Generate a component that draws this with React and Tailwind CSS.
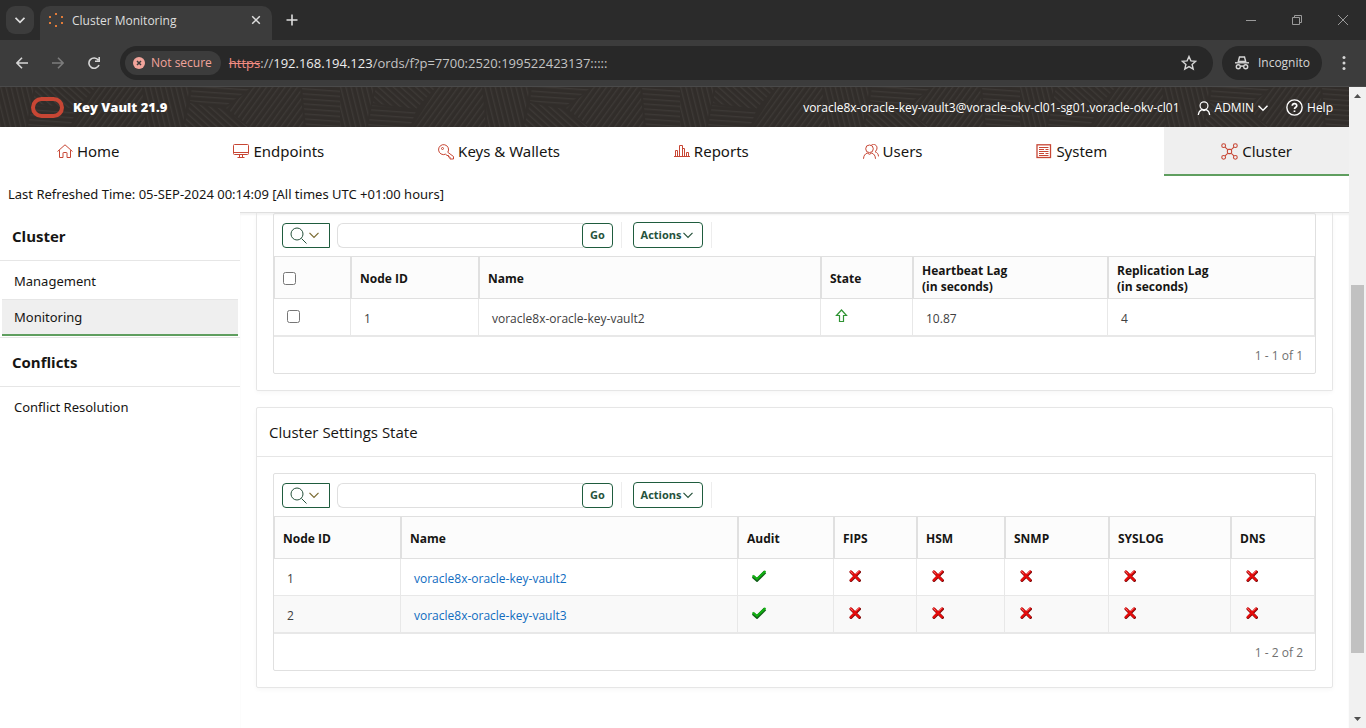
import { useState } from "react";

const ICON = "#c74634";

const patches = [
  { points: "0,0 34,0 26,40 0,40", hatch: "url(#hatchSteep)" },
  { points: "36,0 96,0 76,22 33,16", hatch: "url(#hatchDown)" },
  { points: "32,18 76,24 70,40 28,40", hatch: "url(#hatchFlat)" },
  { points: "98,0 142,0 146,40 72,40", hatch: "url(#hatchUp)" },
  { points: "144,0 190,0 182,40 148,40", hatch: "url(#hatchSteep)" },
  { points: "192,0 252,0 224,20 190,14", hatch: "url(#hatchFlat)" },
  { points: "190,16 224,22 248,40 184,40", hatch: "url(#hatchDown)" },
  { points: "254,0 300,0 304,40 250,40 226,21", hatch: "url(#hatchUp)" },
  { points: "302,0 340,0 340,40 306,40", hatch: "url(#hatchFlat)" },
];

const hatches = [
  { id: "hatchSteep", angle: -14 },
  { id: "hatchDown", angle: -48 },
  { id: "hatchFlat", angle: 94 },
  { id: "hatchUp", angle: 36 },
];

const navItems = [
  { label: "Home", icon: HomeIcon },
  { label: "Endpoints", icon: MonitorIcon },
  { label: "Keys & Wallets", icon: KeyIcon },
  { label: "Reports", icon: ChartIcon },
  { label: "Users", icon: UsersIcon },
  { label: "System", icon: ServerIcon },
  { label: "Cluster", icon: ClusterIcon, active: true },
];

const settingsColumns = ["Audit", "FIPS", "HSM", "SNMP", "SYSLOG", "DNS"];

const settingsRows = [
  { id: 1, name: "voracle8x-oracle-key-vault2", values: [true, false, false, false, false, false] },
  { id: 2, name: "voracle8x-oracle-key-vault3", values: [true, false, false, false, false, false] },
];

function Svg({ size = 16, viewBox = "0 0 16 16", className = "", width = 1, children }) {
  return (
    <svg
      width={size}
      height={size}
      viewBox={viewBox}
      fill="none"
      stroke="currentColor"
      strokeWidth={width}
      className={`shrink-0 ${className}`}
      aria-hidden="true"
    >
      {children}
    </svg>
  );
}

function HomeIcon() {
  return (
    <Svg>
      <path d="M.5 7.500 8 .8l7.500 6.700M2.500 6.200V13.500h3.500V9q0-.5.5-.5h3q.5 0 .5.5v4.500h3.500V6.200" />
    </Svg>
  );
}

function MonitorIcon() {
  return (
    <Svg>
      <rect x=".5" y=".5" width="15" height="10" rx="1" />
      <path d="M.5 8.500h15M6.500 10.500v3M9.500 10.500v3M4.500 13.500h7" />
    </Svg>
  );
}

function KeyIcon() {
  return (
    <Svg>
      <path d="M9.800 8.300A5 5 0 1 0 7.600 10.200L9 11.500h1.500v1.500H12v2h3.500v-2.500z" />
      <circle cx="4.500" cy="4.500" r="1" />
    </Svg>
  );
}

function ChartIcon() {
  return (
    <Svg>
      <path d="M0 12.500h16M1.500 12.500v-6h2v6M5.500 12.500v-11h3v11M8.500 4.500h2v8M12.500 12.500v-4h2v4" />
    </Svg>
  );
}

function UsersIcon() {
  return (
    <Svg>
      <circle cx="6.500" cy="4.800" r="3.800" />
      <path d="M.5 14.800c.2-3.200 1.500-4.800 3.700-5.800l2.300 1.300L8.800 9c2.200 1 3.500 2.600 3.700 5.800M8.500.9c2.600-1.400 5.500.2 5.500 3 0 1.700-.8 3-2 3.800 2.200.8 3.400 2.200 3.500 4.700" />
    </Svg>
  );
}

function ServerIcon() {
  return (
    <Svg>
      <rect x="1" y=".8" width="13.500" height="12.700" width="13.500" strokeWidth="1.300" />
      <path d="M3 3.500h9.500M3 5.500h5M9.500 5.500h3M3 7.500h9.500M3 9.500h5M9.500 9.500h3M3 11.500h9.500" />
    </Svg>
  );
}

function ClusterIcon() {
  return (
    <Svg size={17}>
      <circle cx="2.500" cy="2.500" r="1.800" />
      <circle cx="13.500" cy="2.500" r="1.800" />
      <circle cx="2.500" cy="13.500" r="1.800" />
      <circle cx="13.500" cy="13.500" r="1.800" />
      <rect x="6" y="6" width="4" height="4" rx="1.200" />
      <path d="M3.800 3.800 6.300 6.300M12.200 3.800 9.700 6.300M3.800 12.200l2.500-2.500M12.200 12.200 9.700 9.700" />
    </Svg>
  );
}

function Chevron({ className, width }) {
  return (
    <Svg size={10} viewBox="0 0 10 10" className={className} width={width}>
      <path d="M.5 2.800 5 7.300l4.500-4.500" />
    </Svg>
  );
}

function StatusIcon({ ok }) {
  if (ok) {
    return (
      <svg width="16" height="12" viewBox="0 0 16 12" role="img" aria-label="Enabled" className="block">
        <path d="M2 6.500 6 10l8-8" fill="none" stroke="#14611a" strokeWidth="3.400" />
        <path d="M1.500 5.500 6 9l8.500-8" fill="none" stroke="#12b312" strokeWidth="2" />
      </svg>
    );
  }
  return (
    <svg width="12" height="12" viewBox="0 0 12 12" role="img" aria-label="Disabled" className="ml-[2px] block">
      <path d="M2 2l8.500 8.500M10.500 2 2 10.500" stroke="#7c0a0a" strokeWidth="3" strokeLinecap="round" />
      <path d="M1.800 1.500l8.200 8.500M10 1.500 1.800 10" stroke="#e80c0c" strokeWidth="2.200" strokeLinecap="round" />
      <path d="M1.500 1.500l2 2M9.500 1.500l-2 2" stroke="#f46a6a" strokeWidth="1" strokeLinecap="round" />
    </svg>
  );
}

function TabStrip() {
  return (
    <div className="flex h-10 shrink-0 items-end bg-[#2b2b2b] pl-[6px] text-[#dedede]">
      <button
        type="button"
        aria-label="Search tabs"
        className="mb-[6px] flex h-7 w-7 items-center justify-center rounded-[9px] bg-[#3c3c3c]"
      >
        <Chevron width={1.8} />
      </button>
      <div className="ml-[6px] flex h-[34px] w-[232px] items-center rounded-t-[10px] bg-[#3c3c3c] pb-[6px] pl-2 pr-[11px]">
        <svg width="16" height="16" viewBox="0 0 16 16" fill="#e07b39" aria-hidden="true">
          <rect x="7" y="1" width="2" height="2" />
          <rect x="1" y="4" width="2" height="2" />
          <rect x="13" y="4" width="2" height="2" />
          <rect x="1" y="10" width="2" height="2" />
          <rect x="13" y="10" width="2" height="2" />
          <rect x="7" y="13" width="2" height="2" />
        </svg>
        <span className="ml-2 mt-[2px] flex-1 text-[12px]">Cluster Monitoring</span>
        <button type="button" aria-label="Close tab">
          <Svg size={10} viewBox="0 0 10 10" width={1.5}>
            <path d="M1.200 1.200l7.600 7.600M8.800 1.200 1.200 8.800" />
          </Svg>
        </button>
      </div>
      <button type="button" aria-label="New tab" className="mb-[14px] ml-[14px]">
        <Svg size={12} viewBox="0 0 12 12" width={1.6}>
          <path d="M6 .5v11M.5 6h11" />
        </Svg>
      </button>
      <div className="mb-[15px] ml-auto flex items-center gap-9 pr-[18px] text-[#9a9a9a]">
        <button type="button" aria-label="Minimize">
          <Svg size={10} viewBox="0 0 10 10"><path d="M0 5.500h10" /></Svg>
        </button>
        <button type="button" aria-label="Restore">
          <Svg size={10} viewBox="0 0 10 10"><path d="M.5 2.500h7v7h-7zM2.500 2.500v-2h7v7h-2" /></Svg>
        </button>
        <button type="button" aria-label="Close">
          <Svg size={10} viewBox="0 0 10 10"><path d="M0 0l10 10M10 0 0 10" /></Svg>
        </button>
      </div>
    </div>
  );
}

function AddressBar() {
  return (
    <div className="flex h-[47px] shrink-0 items-center border-b border-[#4a4a4a] bg-[#3c3c3c] pl-4 pr-5 text-[#d6d6d6]">
      <button type="button" aria-label="Back">
        <Svg size={12} viewBox="0 0 12 12" width={1.6}><path d="M12 6H1M6 .8.900 6 6 11.200" /></Svg>
      </button>
      <button type="button" aria-label="Forward" className="ml-6 text-[#7c7c7c]">
        <Svg size={12} viewBox="0 0 12 12" width={1.6}><path d="M0 6h11M6 .8 11.100 6 6 11.200" /></Svg>
      </button>
      <button type="button" aria-label="Reload" className="ml-6">
        <Svg size={12} viewBox="0 0 12 12" width={1.6}><path d="M11 8A5.200 5.200 0 1 1 10.300 3M11.200 0v4.200H7" /></Svg>
      </button>
      <div className="ml-5 flex h-[34px] flex-1 items-center rounded-full bg-[#282828] pl-[5px] pr-4">
        <button type="button" className="flex h-6 items-center rounded-full bg-[#3c3c3c] pl-2 pr-[9px] text-[12px] font-medium text-[#f2a49b]">
          <Svg size={12} viewBox="0 0 12 12" className="mr-[6px]">
            <circle cx="6" cy="6" r="6" fill="#f2a49b" stroke="none" />
            <path d="M4 4l4 4M8 4 4 8" stroke="#3c3c3c" strokeWidth="1.500" />
          </Svg>
          Not secure
        </button>
        <p className="ml-2 flex-1 whitespace-nowrap pt-px text-[13px] text-[#c4c4c4]">
          <span className="text-[#f28b82] line-through">https</span>://
          <span className="text-[#ededed]">192.168.194.123</span>
          /ords/f?p=7700:2520:199522423137:::::
        </p>
        <button type="button" aria-label="Bookmark">
          <Svg width={1.400}>
            <path d="M8 1.500l1.900 4.400 4.800.4-3.600 3.100 1.100 4.700L8 11.600l-4.200 2.500 1.100-4.700L1.300 6.300l4.800-.4z" />
          </Svg>
        </button>
      </div>
      <button type="button" className="ml-[9px] flex h-[34px] items-center rounded-full bg-[#282828] px-3 text-[12px]">
        <Svg className="mr-2" width={1.400}>
          <path d="M4.300 6.500 5.500 2h5l1.200 4.500z" />
          <path d="M1 7.800h14" />
          <circle cx="4.300" cy="11.800" r="2" />
          <circle cx="11.700" cy="11.800" r="2" />
          <path d="M6.300 11.500q1.700-1 3.400 0" />
        </Svg>
        Incognito
      </button>
      <button type="button" aria-label="Menu" className="ml-5">
        <svg width="4" height="16" viewBox="0 0 4 16" fill="currentColor" aria-hidden="true">
          <circle cx="2" cy="2.500" r="1.500" />
          <circle cx="2" cy="8" r="1.500" />
          <circle cx="2" cy="13.500" r="1.500" />
        </svg>
      </button>
    </div>
  );
}

function HeaderTexture() {
  return (
    <svg className="absolute inset-0 h-full w-full" aria-hidden="true">
      <defs>
        {hatches.map((h) => (
          <pattern
            key={h.id}
            id={h.id}
            width="5"
            height="5"
            patternUnits="userSpaceOnUse"
            patternTransform={`rotate(${h.angle})`}
          >
            <rect width="1.300" height="5" fill="#3d3936" />
          </pattern>
        ))}
        <pattern id="texture" width="340" height="40" patternUnits="userSpaceOnUse">
          {patches.map((p) => (
            <polygon key={p.points} points={p.points} fill={p.hatch} />
          ))}
        </pattern>
      </defs>
      <rect width="100%" height="100%" fill="url(#texture)" />
    </svg>
  );
}

function AppHeader() {
  return (
    <header className="relative h-10 shrink-0 bg-[#312d2a] text-white">
      <HeaderTexture />
      <div className="relative flex h-full items-center pl-[31px] pr-4 pt-px">
        <svg width="33" height="21" viewBox="0 0 33 21" fill="none" aria-hidden="true">
          <rect x="2" y="2" width="29" height="17" rx="8.500" stroke={ICON} strokeWidth="4" />
        </svg>
        <span className="ml-[9px] text-[13px] font-extrabold">Key Vault 21.9</span>
        <span className="ml-auto text-[12px]">
          voracle8x-oracle-key-vault3@voracle-okv-cl01-sg01.voracle-okv-cl01
        </span>
        <button type="button" className="ml-[17px] flex items-center text-[12px]">
          <Svg size={14} className="mr-1" width={1.400}>
            <circle cx="8" cy="5.500" r="4.500" />
            <path d="M1.500 16c.3-3.500 1.800-5.200 4-6.200L8 11l2.500-1.200c2.200 1 3.700 2.700 4 6.200" />
          </Svg>
          ADMIN
          <Chevron className="ml-1" width={1.400} />
        </button>
        <button type="button" className="ml-[18px] flex items-center text-[12px]">
          <Svg size={17} className="mr-1" width={1.300}>
            <circle cx="8" cy="8" r="7.200" />
            <path d="M5.900 6.300c.2-2.700 4.300-2.600 4.200 0 0 1.500-2.100 1.500-2.100 3.200M8 10.800v1.500" strokeWidth="1.600" />
          </Svg>
          Help
        </button>
      </div>
    </header>
  );
}

function NavTabs() {
  return (
    <nav className="flex h-[49px] shrink-0 font-['Noto_Sans',sans-serif] text-[15px] text-[#161513]">
      {navItems.map(({ label, icon: Icon, active }) => (
        <a
          key={label}
          href="#"
          className={
            active
              ? "flex flex-auto items-center justify-center border-b-2 border-[#5f9e5f] bg-[#efefef] pt-[2px]"
              : "flex flex-auto items-center justify-center"
          }
        >
          <span className="mr-1 text-[#c74634]">
            <Icon />
          </span>
          {label}
        </a>
      ))}
    </nav>
  );
}

function SideNav() {
  const heading = "flex h-[49px] items-center border-b border-[#e6e6e6] pl-3 font-['Open_Sans',sans-serif] text-[15px] font-bold";
  return (
    <aside className="w-60 shrink-0 font-['Noto_Sans',sans-serif] text-[13px] text-[#161513]">
      <h2 className={heading}>Cluster</h2>
      <a href="#" className="flex h-[38px] items-center pl-[14px] pt-1">Management</a>
      <a
        href="#"
        className="mx-[2px] flex h-[37px] items-center border-b-2 border-t border-b-[#5f9e5f] border-t-[#e6e6e6] bg-[#efefef] pl-3 pt-[2px]"
      >
        Monitoring
      </a>
      <div className="mt-px border-t border-[#e6e6e6]">
        <h2 className={heading}>Conflicts</h2>
        <a href="#" className="flex h-10 items-center pl-[14px] pt-[2px]">Conflict Resolution</a>
      </div>
    </aside>
  );
}

function ReportToolbar({ name }) {
  const [query, setQuery] = useState("");
  const button = "flex items-center border border-[#1f5c3e] bg-white text-[11px] font-bold text-[#26523c]";
  return (
    <div className="flex h-[43px] items-center border-b border-[#e0e0e0] pl-2">
      <button type="button" aria-label="Select columns to search" className={`${button} h-[25px] w-12 rounded-l-[4px] pl-[7px]`}>
        <Svg size={17} viewBox="0 0 17 17" className="mr-[2px]">
          <circle cx="7" cy="7" r="6" />
          <path d="M11.500 11.500l5 5" />
        </Svg>
        <Chevron className="text-[#7a6a30]" width={1.2} />
      </button>
      <input
        type="text"
        aria-label={`Search ${name}`}
        value={query}
        onChange={(e) => setQuery(e.target.value)}
        className="ml-[7px] h-[25px] w-[246px] rounded-l-[6px] border border-r-0 border-[#dfdfdf] px-2 text-[12px] outline-none"
      />
      <button type="button" className={`${button} -ml-px h-[25px] w-[31px] justify-center rounded-[4px]`}>
        Go
      </button>
      <div className="ml-2 flex h-[26px] items-center border-x border-[#ededed] px-[11px] pr-2">
        <button type="button" className={`${button} h-[26px] w-[70px] justify-center rounded-[4px]`}>
          Actions
          <Chevron className="ml-[2px] mr-[2px]" width={1.2} />
        </button>
      </div>
    </div>
  );
}

function Th({ children }) {
  return (
    <th
      scope="col"
      className="h-[42px] border-b border-l-2 border-[#e0e0e0] bg-[#fcfcfc] pl-2 pt-[2px] text-left text-[12px] leading-4 font-bold text-[#161513] first:border-l last:border-r"
    >
      {children}
    </th>
  );
}

function Td({ children }) {
  return (
    <td className="h-[37px] border-b border-l border-[#e8e8e8] pl-[13px] pt-[3px] text-[12px] text-[#404040] first:border-l-0 last:border-r">
      {children}
    </td>
  );
}

function Report({ name, pages, children }) {
  return (
    <div className="m-4 rounded-[2px] border border-[#e0e0e0]">
      <ReportToolbar name={name} />
      {children}
      <p className="flex h-[37px] items-center justify-end border-t border-[#e8e8e8] pr-3 pt-[2px] text-[12px] text-[#707070]">
        {pages}
      </p>
    </div>
  );
}

function LagReport() {
  return (
    <Report name="replication lag" pages="1 - 1 of 1">
      <table className="w-full table-fixed border-separate border-spacing-0">
        <colgroup>
          <col className="w-[76px]" />
          <col className="w-[128px]" />
          <col />
          <col className="w-[92px]" />
          <col className="w-[195px]" />
          <col className="w-[208px]" />
        </colgroup>
        <thead>
          <tr>
            <Th><input type="checkbox" aria-label="Select all" className="block" /></Th>
            <Th>Node ID</Th>
            <Th>Name</Th>
            <Th>State</Th>
            <Th>Heartbeat Lag<br />(in seconds)</Th>
            <Th>Replication Lag<br />(in seconds)</Th>
          </tr>
        </thead>
        <tbody>
          <tr>
            <td className="border-b border-[#e8e8e8] pb-[2px] pl-[13px]">
              <input type="checkbox" aria-label="Select node 1" className="block" />
            </td>
            <Td>1</Td>
            <Td>voracle8x-oracle-key-vault2</Td>
            <Td>
              <div className="pb-[6px]">
                <Svg size={13} viewBox="0 0 13 13" className="ml-px block text-[#2f9433]" width={1.200}>
                  <path d="M6.500 1 1.500 6.500H4.500v6h4v-6h3z" />
                </Svg>
              </div>
            </Td>
            <Td>10.87</Td>
            <Td>4</Td>
          </tr>
        </tbody>
      </table>
    </Report>
  );
}

function SettingsReport() {
  return (
    <Report name="cluster settings" pages="1 - 2 of 2">
      <table className="w-full table-fixed border-separate border-spacing-0">
        <colgroup>
          <col className="w-[126px]" />
          <col />
          <col className="w-[96px]" />
          <col className="w-[83px]" />
          <col className="w-[88px]" />
          <col className="w-[104px]" />
          <col className="w-[122px]" />
          <col className="w-[85px]" />
        </colgroup>
        <thead>
          <tr>
            <Th>Node ID</Th>
            <Th>Name</Th>
            {settingsColumns.map((c) => (
              <Th key={c}>{c}</Th>
            ))}
          </tr>
        </thead>
        <tbody>
          {settingsRows.map((row) => (
            <tr key={row.id} className="even:bg-[#f9f9f9]">
              <Td>{row.id}</Td>
              <Td><a href="#" className="text-[#0f6cbf]">{row.name}</a></Td>
              {row.values.map((ok, i) => (
                <Td key={settingsColumns[i]}>
                  <div className="pb-[5px]"><StatusIcon ok={ok} /></div>
                </Td>
              ))}
            </tr>
          ))}
        </tbody>
      </table>
    </Report>
  );
}

function Scrollbar() {
  return (
    <div className="flex w-[17px] shrink-0 flex-col items-center bg-[#f1f1f1]" aria-hidden="true">
      <svg width="17" height="17" viewBox="0 0 17 17" fill="#505050"><path d="M5 11l3.500-4 3.500 4z" /></svg>
      <div className="w-[13px] grow-[181]" />
      <div className="w-[13px] grow-[368] bg-[#c1c1c1]" />
      <div className="w-[13px] grow-[58]" />
      <svg width="17" height="17" viewBox="0 0 17 17" fill="#505050"><path d="M5 6l3.500 4L12 6z" /></svg>
    </div>
  );
}

export default function App() {
  return (
    <div className="flex h-screen flex-col overflow-hidden bg-white font-['Open_Sans',sans-serif]">
      <TabStrip />
      <AddressBar />
      <div className="flex min-h-0 flex-1">
        <div className="flex min-w-0 flex-1 flex-col">
          <AppHeader />
          <NavTabs />
          <p className="flex h-9 shrink-0 items-center pl-2 pt-[2px] font-['Noto_Sans',sans-serif] text-[13px] text-[#161513]">
            Last Refreshed Time: 05-SEP-2024 00:14:09 [All times UTC +01:00 hours]
          </p>
          <div className="flex min-h-0 flex-1">
            <SideNav />
            <main className="min-w-0 flex-1 border-t border-[#e0e0e0] px-4 shadow-[inset_0_2px_2px_rgba(0,0,0,0.05)]">
              <section className="mb-4 flow-root rounded-b-[2px] border border-t-0 border-[#e6e6e6] shadow-[0_2px_4px_rgba(0,0,0,0.03)]">
                <div className="-mt-4">
                  <LagReport />
                </div>
              </section>
              <section className="rounded-[2px] border border-[#e6e6e6] shadow-[0_2px_4px_rgba(0,0,0,0.03)]">
                <h2 className="flex h-[49px] items-center border-b border-[#e6e6e6] pl-3 text-[15px] text-[#161513]">
                  Cluster Settings State
                </h2>
                <SettingsReport />
              </section>
            </main>
          </div>
        </div>
        <Scrollbar />
      </div>
    </div>
  );
}
